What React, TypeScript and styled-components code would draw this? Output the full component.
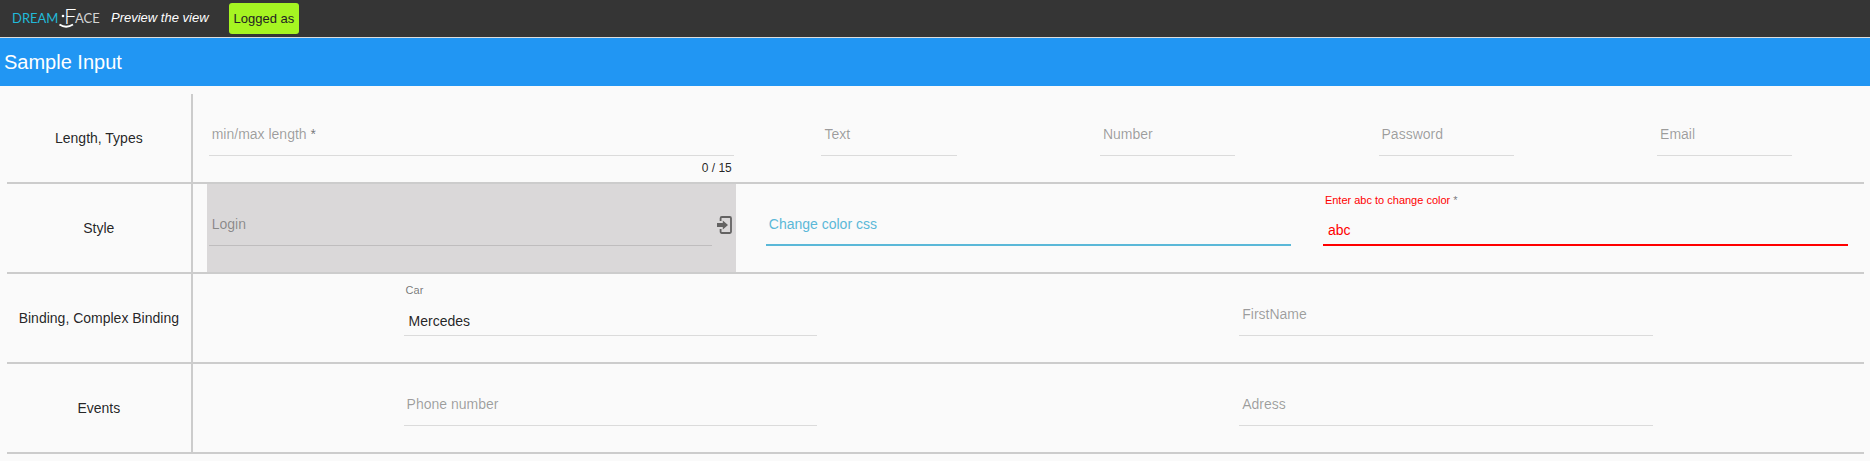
import React, { useId, useState } from 'react';
import styled, { createGlobalStyle } from 'styled-components';

const GlobalStyle = createGlobalStyle`
  *, *::before, *::after { box-sizing: border-box; }
  body {
    margin: 0;
    background: #fafafa;
    color: rgba(0, 0, 0, 0.87);
    font-family: "Liberation Sans", Arial, sans-serif;
    font-size: 14px;
    line-height: 16px;
  }
`;

const TopBar = styled.header`
  display: flex;
  align-items: center;
  height: 38px;
  padding: 0 12px 1px;
  background: #353535;
  border-bottom: 1px solid #dddddd;
`;

const LogoLink = styled.a`
  display: flex;
  text-decoration: none;
`;

const Tagline = styled.em`
  margin: 0 20px 0 10px;
  color: #ffffff;
  font-size: 13px;
`;

const SessionButton = styled.button`
  height: 31px;
  padding: 0 5px;
  border: 0;
  border-radius: 3px;
  background: #a6f522;
  color: #222222;
  font: 13px "Liberation Sans", Arial, sans-serif;
`;

const TitleBar = styled.div`
  display: flex;
  align-items: center;
  height: 48px;
  padding: 0 4px;
  background: #2196f3;
`;

const Title = styled.h1`
  margin: 0;
  color: #ffffff;
  font-size: 20px;
  font-weight: 400;
  line-height: 24px;
`;

const Sheet = styled.form`
  padding: 8px 6px 0 7px;
`;

const Row = styled.section`
  display: flex;
  min-height: 90px;
  border-bottom: 2px solid #cccccc;
`;

const RowTitle = styled.h2`
  display: flex;
  flex: 0 0 10%;
  align-items: center;
  justify-content: center;
  margin: 0;
  border-right: 2px solid #cccccc;
  font-size: 14px;
  font-weight: 400;
  white-space: nowrap;
`;

const Fields = styled.div<{ $columns: string }>`
  display: grid;
  flex: 1;
  grid-template-columns: ${(p) => p.$columns};
`;

/* $inset is the share of the column left free on each side */
const Column = styled.div<{ $inset: string }>`
  display: flex;
  min-width: 0;
  padding: 0 ${(p) => p.$inset};
`;

const Panel = styled.div<{ $shaded?: boolean }>`
  display: flex;
  flex: 1;
  min-width: 0;
  padding: 0 2px;
  background: ${(p) => (p.$shaded ? '#dad8d9' : 'transparent')};
`;

const FieldBox = styled.div`
  display: grid;
  flex: 1;
  grid-template-rows: 62px 26px;
  min-width: 0;
`;

const Label = styled.label<{ $raised: boolean; $color?: string }>`
  grid-area: 1 / 1;
  align-self: start;
  justify-self: start;
  z-index: 1;
  padding: ${(p) => (p.$raised ? '10px 2px 0' : '32px 3px 0')};
  color: ${(p) => p.$color ?? (p.$raised ? 'rgba(0, 0, 0, 0.54)' : 'rgba(0, 0, 0, 0.38)')};
  font-size: ${(p) => (p.$raised ? '11px' : '14px')};
  line-height: ${(p) => (p.$raised ? '12px' : '16px')};
  pointer-events: none;
`;

const Required = styled.span`
  color: rgba(0, 0, 0, 0.54);
`;

const Input = styled.input<{ $color?: string }>`
  grid-area: 1 / 1;
  align-self: end;
  width: 100%;
  height: 30px;
  padding: 0 5px;
  border: 0;
  border-bottom: ${(p) => (p.$color ? `2px solid ${p.$color}` : '1px solid rgba(0, 0, 0, 0.12)')};
  border-radius: 0;
  outline: 0;
  background: transparent;
  color: ${(p) => p.$color ?? 'rgba(0, 0, 0, 0.87)'};
  font: 14px "Liberation Sans", Arial, sans-serif;
`;

const Counter = styled.output`
  padding: 4px 2px 0;
  font-size: 12px;
  text-align: right;
`;

const LoginIcon = styled.svg`
  flex: none;
  width: 16px;
  height: 18px;
  margin: 32px 2px 0 4px;
`;

type FieldProps = {
  label: string;
  type?: string;
  initial?: string;
  color?: string;
  required?: boolean;
  max?: number;
  shaded?: boolean;
  inset?: string;
  children?: React.ReactNode;
};

function Field({
  label, type = 'text', initial = '', color, required, max, shaded, inset = '14px', children,
}: FieldProps) {
  const id = useId();
  const [value, setValue] = useState(initial);
  return (
    <Column $inset={inset}>
      <Panel $shaded={shaded}>
        <FieldBox>
          <Label htmlFor={id} $raised={value !== ''} $color={color}>
            {label}
            {required && <Required> *</Required>}
          </Label>
          <Input
            id={id}
            type={type}
            value={value}
            maxLength={max}
            $color={color}
            onChange={(e) => setValue(e.target.value)}
          />
          {max && <Counter htmlFor={id}>{value.length} / {max}</Counter>}
        </FieldBox>
        {children}
      </Panel>
    </Column>
  );
}

function Logo() {
  return (
    <svg width="89" height="36" viewBox="0 0 89 36" role="img" aria-label="DreamFace">
      <g fontFamily="Lato, sans-serif" fontSize="13">
        <text x="0" y="23" fill="#22b8d8">DREAM</text>
        <text x="63" y="23" fill="#d4d4d4">ACE</text>
      </g>
      <text x="52" y="24" fill="#ffffff" fontFamily="Lato, sans-serif" fontWeight="300" fontSize="22">F</text>
      <circle cx="51" cy="16" r="1.3" fill="#ffffff" />
      <path d="M47.5 24.5 Q54 29 61 24.5" fill="none" stroke="#ffffff" strokeWidth="1.8" />
    </svg>
  );
}

export default function App() {
  return (
    <>
      <GlobalStyle />
      <TopBar>
        <LogoLink href="#"><Logo /></LogoLink>
        <Tagline>Preview the view</Tagline>
        <SessionButton type="button">Logged as</SessionButton>
      </TopBar>
      <TitleBar>
        <Title>Sample Input</Title>
      </TitleBar>
      <Sheet>
        <Row>
          <RowTitle>Length, Types</RowTitle>
          <Fields $columns="4fr 2fr 2fr 2fr 2fr">
            <Field label="min/max length" required max={15} />
            <Field label="Text" inset="25%" />
            <Field label="Number" type="number" inset="25%" />
            <Field label="Password" type="password" inset="25%" />
            <Field label="Email" type="email" inset="25%" />
          </Fields>
        </Row>
        <Row>
          <RowTitle>Style</RowTitle>
          <Fields $columns="repeat(3, 1fr)">
            <Field label="Login" shaded>
              <LoginIcon viewBox="0 0 16 18" fill="none" aria-hidden="true">
                <path
                  d="M4.6 5V2.2Q4.6 1 5.8 1H13.8Q15 1 15 2.2V15.8Q15 17 13.8 17H5.8Q4.6 17 4.6 15.8V13"
                  stroke="#636262"
                  strokeWidth="1.8"
                />
                <path d="M1 7H6.8V4.4L12 9L6.8 13.6V11H1Z" fill="#636262" />
              </LoginIcon>
            </Field>
            <Field label="Change color css" color="#5ab8d8" />
            <Field label="Enter abc to change color" initial="abc" color="#ff0000" required />
          </Fields>
        </Row>
        <Row>
          <RowTitle>Binding, Complex Binding</RowTitle>
          <Fields $columns="repeat(2, 1fr)">
            <Field label="Car" initial="Mercedes" inset="25%" />
            <Field label="FirstName" inset="25%" />
          </Fields>
        </Row>
        <Row>
          <RowTitle>Events</RowTitle>
          <Fields $columns="repeat(2, 1fr)">
            <Field label="Phone number" type="tel" inset="25%" />
            <Field label="Adress" inset="25%" />
          </Fields>
        </Row>
      </Sheet>
    </>
  );
}
